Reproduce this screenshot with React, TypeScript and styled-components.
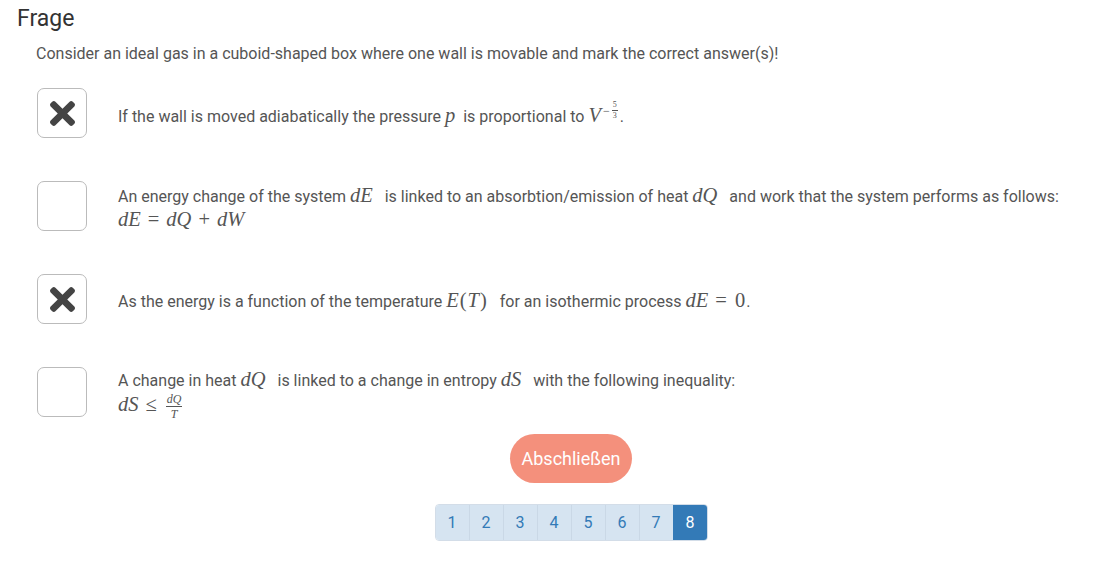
import React from 'react';
import styled, { createGlobalStyle } from 'styled-components';

const Global = createGlobalStyle`
  html, body { margin: 0; padding: 0; background: #fff; }
  body { font-family: Roboto, "Liberation Sans", sans-serif; color: #555; }
`;

const Page = styled.div`
  padding: 6px 13px 0 17px;
`;
const Title = styled.h1`
  margin: 0;
  font-size: 23px;
  font-weight: 400;
  line-height: 26px;
  color: #333;
`;
const Body = styled.div`
  padding-left: 19px;
`;
const Prompt = styled.p`
  margin: 10px 0 22px;
  font-size: 16px;
  line-height: 24px;
`;
const Options = styled.div`
  display: flex;
  flex-direction: column;
  gap: 43px;
`;
const Option = styled.div`
  display: flex;
  align-items: center;
  gap: 31px;
  height: 50px;
`;
const Box = styled.div`
  width: 50px;
  height: 50px;
  box-sizing: border-box;
  border: 1px solid #bbb;
  border-radius: 7px;
  display: flex;
  align-items: center;
  justify-content: center;
  flex: none;
  margin-left: 1px;
  background: #fff;
`;
const OptText = styled.div<{ $shift?: number }>`
  font-size: 16px;
  line-height: 24px;
  padding-top: ${p => p.$shift ?? 5}px;
`;
const M = styled.span<{ $after?: number }>`
  font-family: "Liberation Serif", "DejaVu Serif", serif;
  font-style: italic;
  font-size: 20.5px;
  line-height: 1;
  margin-right: ${p => p.$after ?? 0}px;
`;
const Op = styled.span`
  font-style: normal;
  margin: 0 7px;
`;
const Up = styled.span`
  font-style: normal;
  margin: 0 1px;
`;
const Sup = styled.sup`
  font-size: 12px;
  font-style: normal;
  vertical-align: 7px;
  line-height: 0;
  display: inline-flex;
  align-items: center;
  margin-left: 2px;
`;
const Frac = styled.span<{ $size: number }>`
  display: inline-flex;
  flex-direction: column;
  align-items: center;
  vertical-align: middle;
  font-size: ${p => p.$size}px;
  line-height: 1;
  margin: 0 2px;
`;
const Num = styled.span`
  padding: 0 1px 1px;
  border-bottom: 0.8px solid #555;
`;
const Den = styled.span`
  padding-top: 1px;
`;
const Footer = styled.div`
  display: flex;
  flex-direction: column;
  align-items: center;
`;
const Button = styled.button`
  margin-top: 17px;
  height: 49px;
  padding: 0 12px;
  border: none;
  border-radius: 25px;
  background: #f4907c;
  color: #fff;
  font-family: Roboto, "Liberation Sans", sans-serif;
  font-size: 18px;
`;
const Pager = styled.div`
  margin-top: 21px;
  display: flex;
  border-radius: 4px;
  overflow: hidden;
  border: 1px solid #d3dde8;
`;
const PageItem = styled.div<{ $active?: boolean }>`
  width: 34px;
  height: 35px;
  box-sizing: border-box;
  display: flex;
  align-items: center;
  justify-content: center;
  font-size: 16px;
  background: ${p => (p.$active ? '#337ab7' : '#d6e4f1')};
  color: ${p => (p.$active ? '#fff' : '#337ab7')};
  border-left: 1px solid ${p => (p.$active ? '#337ab7' : '#cad8e6')};
  &:first-child { border-left: none; width: 33px; }
`;

const Cross = () => (
  <svg width="25" height="25" viewBox="0 80 352 352">
    <path
      fill="#444"
      d="M242.72 256l100.07-100.07c12.28-12.28 12.28-32.19 0-44.48l-22.24-22.24c-12.28-12.28-32.19-12.28-44.48 0L176 189.28 75.93 89.21c-12.28-12.28-32.19-12.28-44.48 0L9.21 111.45c-12.28 12.28-12.28 32.19 0 44.48L109.28 256 9.21 356.07c-12.28 12.28-12.28 32.19 0 44.48l22.24 22.24c12.28 12.28 32.2 12.28 44.48 0L176 322.72l100.07 100.07c12.28 12.28 32.2 12.28 44.48 0l22.24-22.24c12.28-12.28 12.28-32.19 0-44.48L242.72 256z"
    />
  </svg>
);

export default function App() {
  return (
    <Page>
      <Global />
      <Title>Frage</Title>
      <Body>
        <Prompt>
          Consider an ideal gas in a cuboid-shaped box where one wall is movable and mark the correct answer(s)!
        </Prompt>
        <Options>
          <Option>
            <Box><Cross /></Box>
            <OptText $shift={4}>
              If the wall is moved adiabatically the pressure <M $after={4}>p</M> is proportional to{' '}
              <M>
                V
                <Sup>
                  −
                  <Frac $size={8}>
                    <Num>5</Num>
                    <Den>3</Den>
                  </Frac>
                </Sup>
              </M>
              .
            </OptText>
          </Option>
          <Option>
            <Box />
            <OptText>
              An energy change of the system <M $after={8}>dE</M> is linked to an absorbtion/emission of heat{' '}
              <M $after={8}>dQ</M> and work that the system performs as follows:
              <br />
              <M>
                dE<Op>=</Op>dQ<Op>+</Op>dW
              </M>
            </OptText>
          </Option>
          <Option>
            <Box><Cross /></Box>
            <OptText>
              As the energy is a function of the temperature{' '}
              <M $after={8}>
                E<Up>(</Up>T<Up>)</Up>
              </M>{' '}
              for an isothermic process{' '}
              <M>
                dE<Op>=</Op>
                <Up>0</Up>
              </M>
              .
            </OptText>
          </Option>
          <Option>
            <Box />
            <OptText>
              A change in heat <M $after={8}>dQ</M> is linked to a change in entropy <M $after={8}>dS</M> with the
              following inequality:
              <br />
              <M>
                dS<Op>≤</Op>
                <Frac $size={12}>
                  <Num>dQ</Num>
                  <Den>T</Den>
                </Frac>
              </M>
            </OptText>
          </Option>
        </Options>
        <Footer>
          <Button>Abschließen</Button>
          <Pager>
            {[1, 2, 3, 4, 5, 6, 7, 8].map(n => (
              <PageItem key={n} $active={n === 8}>
                {n}
              </PageItem>
            ))}
          </Pager>
        </Footer>
      </Body>
    </Page>
  );
}
